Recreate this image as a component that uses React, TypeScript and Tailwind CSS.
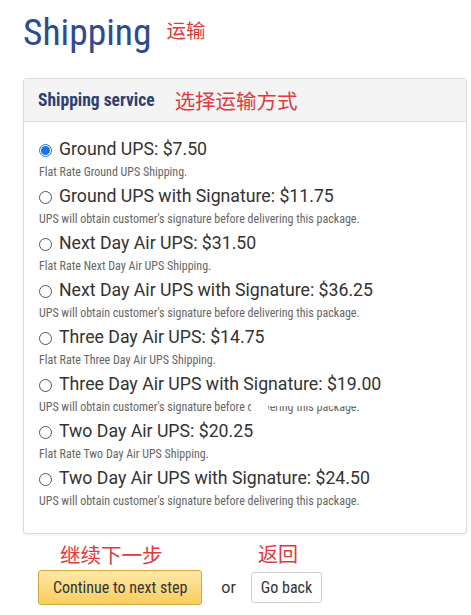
import React from "react";

type Option = { label: string; note: string };

const options: Option[] = [
  { label: "Ground UPS: $7.50", note: "Flat Rate Ground UPS Shipping." },
  { label: "Ground UPS with Signature: $11.75", note: "UPS will obtain customer's signature before delivering this package." },
  { label: "Next Day Air UPS: $31.50", note: "Flat Rate Next Day Air UPS Shipping." },
  { label: "Next Day Air UPS with Signature: $36.25", note: "UPS will obtain customer's signature before delivering this package." },
  { label: "Three Day Air UPS: $14.75", note: "Flat Rate Three Day Air UPS Shipping." },
  { label: "Three Day Air UPS with Signature: $19.00", note: "UPS will obtain customer's signature before delivering this package." },
  { label: "Two Day Air UPS: $20.25", note: "Flat Rate Two Day Air UPS Shipping." },
  { label: "Two Day Air UPS with Signature: $24.50", note: "UPS will obtain customer's signature before delivering this package." },
];

const cjk = "font-['Noto_Sans_CJK_SC',sans-serif]";
const narrow = "font-['Roboto_Condensed','Liberation_Sans_Narrow',sans-serif]";

function Radio({ checked }: { checked: boolean }) {
  if (checked) {
    return (
      <span className="w-[13px] h-[13px] rounded-full border border-[#1a73e8] bg-white flex items-center justify-center shrink-0">
        <span className="w-[9px] h-[9px] rounded-full bg-[#1a73e8]" />
      </span>
    );
  }
  return <span className="w-[13px] h-[13px] rounded-full border border-[#555] bg-white shrink-0" />;
}

export default function App() {
  return (
    <div className="w-[471px] h-[615px] overflow-hidden bg-white font-['Roboto',sans-serif] pl-[23px] pt-[8px]">
      {/* Title */}
      <div className="flex items-center h-[50px]">
        <h1 className={`${narrow} text-[37.5px] leading-none text-[#2f4b8d]`}>Shipping</h1>
        <span className={`${cjk} text-[19.5px] text-[#e03a3a] ml-[15px] -mt-[6px]`}>运输</span>
      </div>

      {/* Panel */}
      <div className="mt-[20px] w-[444px] border border-[#dcdcdc] rounded-[3px] shadow-[0_1px_2px_rgba(0,0,0,0.08)]">
        <div className="h-[43px] bg-[#f4f4f4] border-b border-[#dcdcdc] flex items-center px-[14px]">
          <span className={`${narrow} text-[17.5px] font-bold text-[#2c4170]`}>Shipping service</span>
          <span className={`${cjk} text-[20.5px] text-[#e03a3a] ml-[20px]`}>选择运输方式</span>
        </div>
        <div className="pt-[17px] pb-[18px] px-[15px]">
          {options.map((o, i) => (
            <div key={i} className="relative">
              <div className="flex items-center h-[22px] gap-[7px]">
                <Radio checked={i === 0} />
                <span className="text-[17.7px] text-[#333] leading-none">{o.label}</span>
              </div>
              <div className={`${narrow} h-[25px] pt-[4px] text-[12px] leading-[14px] text-[#666]`}>
                {o.note}
              </div>
              {i === 5 && (
                <>
                  <div className="absolute left-[212px] top-[25px] w-[17px] h-[14px] bg-white" />
                  <div className="absolute left-[229px] top-[25px] w-[96px] h-[7px] bg-white" />
                </>
              )}
            </div>
          ))}
        </div>
      </div>

      {/* Actions */}
      <div className="mt-[8px] pl-[15px]">
        <div className="flex h-[24px] items-center">
          <span className={`${cjk} text-[20.5px] text-[#e03a3a] w-[220px] pl-[22px]`}>继续下一步</span>
          <span className={`${cjk} text-[20px] text-[#e03a3a]`}>返回</span>
        </div>
        <div className="flex items-center mt-[4px]">
          <button className={`${narrow} h-[35px] px-[14px] rounded-[3px] border border-[#d6a83c] bg-gradient-to-b from-[#fde8a6] to-[#f7cd5c] text-[16px] text-[#333]`}>
            Continue to next step
          </button>
          <span className="text-[16px] text-[#333] ml-[19px] mr-[15px]">or</span>
          <button className={`${narrow} h-[31px] px-[9px] rounded-[3px] border border-[#cfcfcf] bg-white text-[16px] text-[#333]`}>
            Go back
          </button>
        </div>
      </div>
    </div>
  );
}
